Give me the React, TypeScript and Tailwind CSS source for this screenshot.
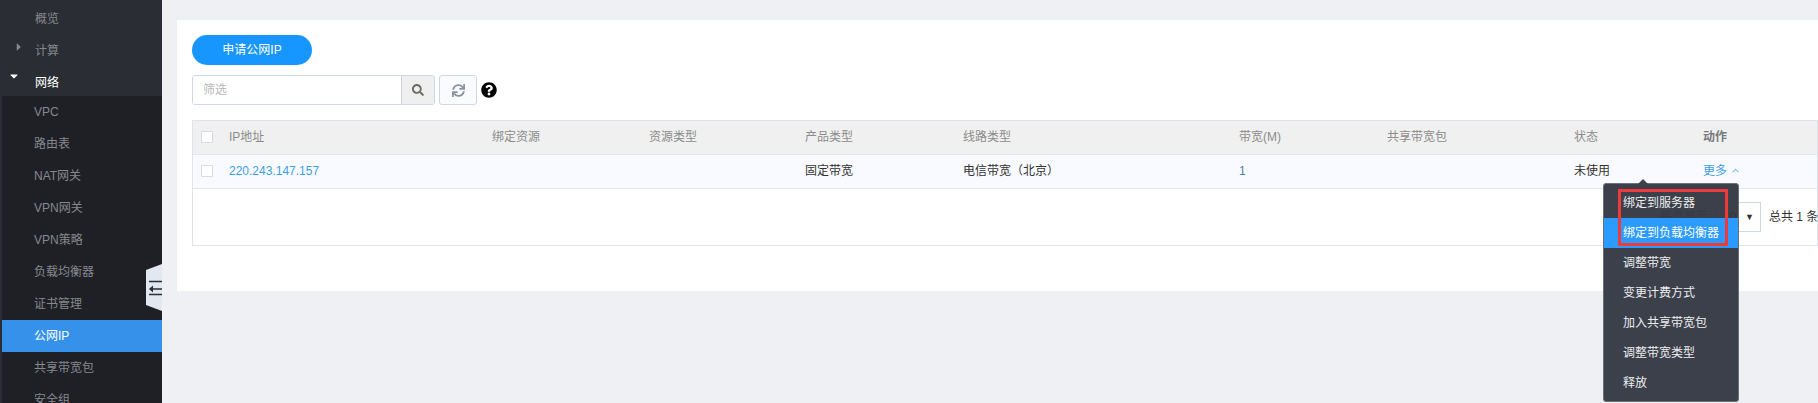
import { ChevronUp } from "lucide-react";
import { FaSearch, FaSync, FaQuestionCircle, FaCaretRight, FaCaretDown } from "react-icons/fa";

const subItems = ["VPC", "路由表", "NAT网关", "VPN网关", "VPN策略", "负载均衡器", "证书管理", "公网IP", "共享带宽包", "安全组"];
const menuItems = ["绑定到服务器", "绑定到负载均衡器", "调整带宽", "变更计费方式", "加入共享带宽包", "调整带宽类型", "释放"];
const columns = [
  { label: "IP地址", width: "w-[263px]" },
  { label: "绑定资源", width: "w-[157px]" },
  { label: "资源类型", width: "w-[156px]" },
  { label: "产品类型", width: "w-[158px]" },
  { label: "线路类型", width: "w-[276px]" },
  { label: "带宽(M)", width: "w-[148px]" },
  { label: "共享带宽包", width: "w-[187px]" },
  { label: "状态", width: "w-[129px]" },
];

function Sidebar() {
  return (
    <aside className="relative w-[162px] h-full shrink-0 border-l-2 border-[#2a2d33] bg-[#1f2026] text-xs text-[#85888f]">
      {/* Top level */}
      <div className="bg-[#2a2d33] pt-[3px]">
        <div className="h-8 flex items-center pl-[33px]">概览</div>
        <div className="relative h-8 flex items-center pl-[33px]">
          <FaCaretRight className="absolute left-[12px] top-[6px] w-[10px] h-[12px] text-[#85888f]" />
          计算
        </div>
        <div className="relative h-[29px] pt-[2px] flex items-center pl-[33px] text-white">
          <FaCaretDown className="absolute left-[6px] top-[3px] w-[12px] h-[12px] text-white" />
          网络
        </div>
      </div>
      {/* Network children */}
      {subItems.map((item) => (
        <div
          key={item}
          className={`h-8 flex items-center pl-[32px] ${item === "公网IP" ? "bg-[#3591ea] text-white" : ""}`}
        >
          {item}
        </div>
      ))}
      <div className="absolute left-[144px] top-[264px] w-4 h-[47px] bg-[#e3e7f1] [clip-path:polygon(0_13%,100%_0,100%_100%,0_87%)] overflow-hidden">
        <svg width="16" height="47" viewBox="0 0 16 47" className="text-[#2a2d33]">
          <path d="M3 17.5h13M7 25h9M3 30.5h13" stroke="currentColor" strokeWidth="1.6" />
          <path d="M3 25l4-3.5v7z" fill="currentColor" />
        </svg>
      </div>
    </aside>
  );
}

function Toolbar() {
  return (
    <>
      <button className="w-[120px] h-[30px] rounded-[15px] bg-[#1796ff] text-white text-xs">申请公网IP</button>
      <div className="mt-[10px] flex items-center">
        <div className="flex w-[243px] h-[30px] rounded-[3px] border border-[#cdd7e6] overflow-hidden">
          <div className="flex-1 bg-white pl-[10px] text-xs text-[#b9b9b9] flex items-center">筛选</div>
          <div className="w-[33px] bg-[#efefef] border-l border-[#cfd3d9] flex items-center justify-center">
            <FaSearch className="w-3 h-3 text-[#6e6a66]" />
          </div>
        </div>
        <div className="ml-[4px] w-[38px] h-[30px] rounded-[3px] border border-[#cdd7e6] bg-[#f9fbfe] flex items-center justify-center">
          <FaSync className="w-[13px] h-[13px] text-[#8a949e]" />
        </div>
        <FaQuestionCircle className="ml-[4px] w-4 h-4 text-black" />
      </div>
    </>
  );
}

function IpTable() {
  return (
    <div className="mt-[15px] h-[126px] border border-[#dfe3ea] text-xs">
      {/* Header */}
      <div className="h-[34px] pb-[2px] flex items-center bg-[#f0f0f0] border-b border-[#e2e6ef] text-[#8c8c8c]">
        <span className="ml-[8px] mr-[16px] w-3 h-3 bg-white border border-[#d5dae3] rounded-[1px]" />
        {columns.map((col) => (
          <div key={col.label} className={`${col.width} shrink-0`}>{col.label}</div>
        ))}
        <div className="font-bold text-[#77797c]">动作</div>
      </div>
      {/* Row */}
      <div className="h-[34px] pb-[2px] flex items-center bg-[#f9faff] border-b border-[#e2e6ef] text-[#333]">
        <span className="ml-[8px] mr-[16px] w-3 h-3 bg-white border border-[#d5dae3] rounded-[1px]" />
        <div className="w-[263px] shrink-0 text-[#3d9ee3]">220.243.147.157</div>
        <div className="w-[157px] shrink-0" />
        <div className="w-[156px] shrink-0" />
        <div className="w-[158px] shrink-0">固定带宽</div>
        <div className="w-[276px] shrink-0">电信带宽（北京）</div>
        <div className="w-[148px] shrink-0 text-[#4a7f9f]">1</div>
        <div className="w-[187px] shrink-0" />
        <div className="w-[129px] shrink-0">未使用</div>
        <div className="flex items-center text-[#3d9ee3]">
          更多
          <ChevronUp className="ml-[3px] w-[11px] h-[11px]" />
        </div>
      </div>
      {/* Pager, mostly behind the menu */}
      <div className="h-[56px] pl-[1467px] flex items-center text-[#333]">
        <span className="whitespace-nowrap text-[#777]">每页显示</span>
        <div className="ml-[8px] w-[45px] h-[30px] shrink-0 border border-[#c8d8e6] flex items-center justify-between px-[6px]">
          <span>10</span>
          <span className="text-[9px]">▼</span>
        </div>
        <span className="ml-[8px] whitespace-nowrap">总共 1 条</span>
      </div>
    </div>
  );
}

function ActionMenu() {
  return (
    <div className="absolute left-[1603px] top-[183px] w-[136px] h-[219px] pt-[4px] rounded-[3px] border border-[#6b7078] bg-[#313640]/95 text-xs text-[#eceef0]">
      <span className="absolute left-[34px] -top-[5px] w-0 h-0 border-x-[5px] border-x-transparent border-b-[5px] border-b-[#3b4049]" />
      {menuItems.map((item, i) => (
        <div key={item} className={`h-[30px] flex items-center pl-[19px] ${i === 1 ? "bg-[#2b9bff] text-white" : ""}`}>
          {item}
        </div>
      ))}
      {/* annotation from the screenshot */}
      <div className="absolute left-[14px] top-[5px] w-[110px] h-[57px] border-[3px] border-[#f03a3a]" />
    </div>
  );
}

export default function App() {
  return (
    <div className="relative flex w-[1818px] h-[403px] overflow-hidden bg-[#eef0f4] font-['Liberation_Sans','Noto_Sans_CJK_SC',sans-serif]">
      <Sidebar />
      <main className="flex-1 min-w-0 pl-[15px] pt-5">
        <div className="h-[271px] bg-white pt-[15px] pl-[15px]">
          <Toolbar />
          <IpTable />
        </div>
      </main>
      <ActionMenu />
    </div>
  );
}
